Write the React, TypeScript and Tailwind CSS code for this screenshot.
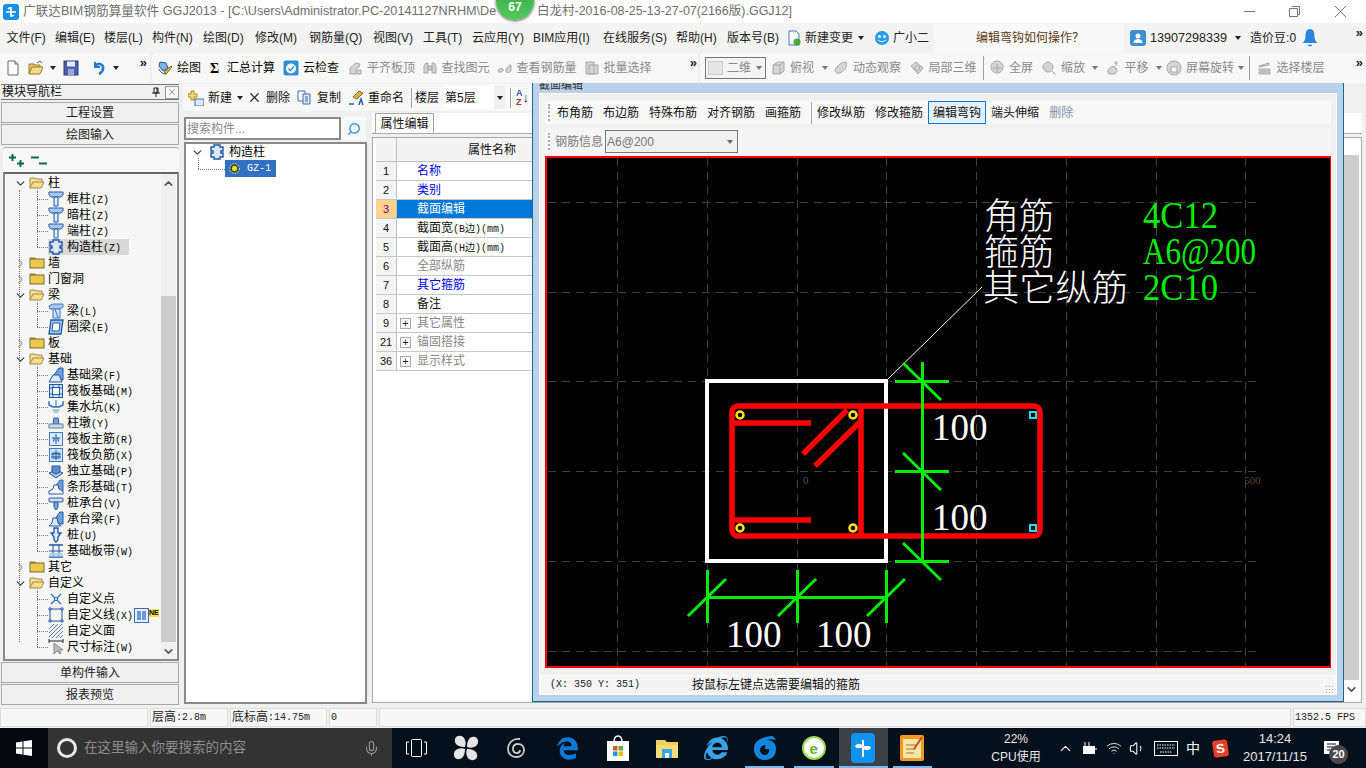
import type { ReactNode } from 'react'
import { FaEdgeLegacy, FaInternetExplorer } from 'react-icons/fa'
import { Mic, ChevronUp, ChevronDown, ChevronRight, Volume1, Wifi, Search, X } from 'lucide-react'

const Caret = ({ className = '' }: { className?: string }) => (
  <span className={`inline-block h-0 w-0 border-x-[3px] border-t-[4px] border-x-transparent border-t-[#222] ${className}`} />
)

const More = () => <span className="text-[13px] font-bold leading-none text-[#222]">»</span>

const Sep = () => <span className="h-[24px] w-px shrink-0 bg-[#a0a0a0]" />

// ---- toolbar icons
const Ico = ({ children, size = 16 }: { children: ReactNode; size?: number }) => (
  <svg width={size} height={size} viewBox="0 0 16 16" className="shrink-0">
    {children}
  </svg>
)

const FileIco = () => (
  <Ico><path d="M3 1h7l3 3v11H3z" fill="#fff" stroke="#667" /><path d="M10 1v3h3" fill="#dde" stroke="#667" /></Ico>
)
const OpenIco = () => (
  <Ico><path d="M1 14V4h5l1 1h5v2" fill="#e8c46a" stroke="#9a7a2a" /><path d="M1 14l3-7h11l-3 7z" fill="#f3d98c" stroke="#9a7a2a" /><path d="M9 3l3-2 2 2" fill="none" stroke="#2a6ab0" /></Ico>
)
const SaveIco = () => (
  <Ico><rect x="1" y="1" width="14" height="14" fill="#4a5fb0" stroke="#2c3a80" /><rect x="4" y="1.5" width="8" height="5" fill="#e8ecf8" /><rect x="5" y="9" width="6" height="6" fill="#9aa8d8" /></Ico>
)
const UndoIco = () => (
  <Ico><path d="M4 2v5h5" fill="none" stroke="#2a7ad0" strokeWidth="2" /><path d="M4 6c3-4 9-2 8 3-.5 2.5-2 4-4 5" fill="none" stroke="#2a7ad0" strokeWidth="2.6" /></Ico>
)
const DrawIco = () => (
  <Ico><path d="M3 2l6 1 2 5-5 3-4-5z" fill="#7fb2e6" stroke="#2a5a9a" /><path d="M7 12l7-6 1 1-6 7z" fill="#e8b23a" stroke="#8a6a1a" /><path d="M2 9c1 3 4 5 7 5" fill="none" stroke="#2a5a9a" /></Ico>
)
const CloudIco = () => (
  <Ico><rect x="0.5" y="0.5" width="15" height="15" rx="2" fill="#2f8fdc" /><circle cx="8" cy="8.5" r="5" fill="#fff" /><path d="M5.5 8.5l2 2 3.500-4" fill="none" stroke="#2f8fdc" strokeWidth="1.500" /></Ico>
)
const Dim = ({ d }: { d: string }) => (
  <Ico><path d={d} fill="#d4d4d4" stroke="#a8a8a8" /></Ico>
)
const GrayIcons = {
  align: 'M3 14V8l6-5 4 1-1 3-3 1v6z M10 10h4v4h-4z',
  find: 'M2 13V6l2-3h2v10z M10 13V3h2l2 3v7z M6 6h4v4H6z',
  look: 'M1 11c0-2 3-3 5-2v2c-1 1-5 2-5 0z M9 11c0-3 3-6 5-6v6c-2 2-5 2-5 0z',
  batch: 'M2 2h8v12H2z M5 5h9v9H5z',
  top: 'M3 5l5-3h6v9l-4 3H3z M3 5h7v9 M10 5l4-3',
  orbit: 'M2 11c2-6 7-9 11-9 2 3-1 9-6 11-2 1-4 0-5-2z',
  local: 'M2 6l5-4 7 6-5 6z M5 8l3-3 3 3-3 3z',
  full: 'M8 1a6 6 0 1 0 .01 0z M8 4v8 M4 8h8',
  zoom: 'M7 2a5 5 0 1 0 .01 0z M10.5 10.5l4 4',
  pan: 'M4 14c-2-2-1-5 1-6l3-2 3 2 1 3-2 3z M11 1v5 M9 3h4',
  rotate: 'M8 1a7 7 0 1 0 .01 0z M5 7h6v5H5z',
  floor: 'M2 6l10-3v2L2 7z M2 9h11v2H2z M2 12h11v2H2z'
}

const Tool = ({ icon, label, w, gray, caret }: { icon: ReactNode; label: string; w: string; gray?: boolean; caret?: string }) => (
  <div className={`flex shrink-0 items-center ${w}`}>
    {icon}
    <span className={`ml-[4px] whitespace-nowrap ${gray ? 'text-[#8a8a8a]' : 'text-[#111]'}`}>{label}</span>
    {caret && <Caret className={`${caret} border-t-[#777]`} />}
  </div>
)

const menus = [
  { t: '文件(F)', w: 'w-[48.5px]' },
  { t: '编辑(E)', w: 'w-[49px]' },
  { t: '楼层(L)', w: 'w-[48px]' },
  { t: '构件(N)', w: 'w-[51px]' },
  { t: '绘图(D)', w: 'w-[52px]' },
  { t: '修改(M)', w: 'w-[54px]' },
  { t: '钢筋量(Q)', w: 'w-[64px]' },
  { t: '视图(V)', w: 'w-[50px]' },
  { t: '工具(T)', w: 'w-[49px]' },
  { t: '云应用(Y)', w: 'w-[61px]' },
  { t: 'BIM应用(I)', w: 'w-[70px]' },
  { t: '在线服务(S)', w: 'w-[73px]' },
  { t: '帮助(H)', w: 'w-[51px]' },
  { t: '版本号(B)', w: 'w-[58px]' }
]

function TitleBar() {
  return (
    <div className="relative flex h-[23px] shrink-0 items-center bg-white text-[#6e6e6e]">
      <span className="ml-[3px] flex h-[16px] w-[16px] items-center justify-center rounded-[3px] bg-[#1a8fe8]">
        <svg width="12" height="12" viewBox="0 0 12 12"><path d="M6 1v10M1 6h10M3 3c2-2 4 0 3 3M9 9c-2 2-4 0-3-3" fill="none" stroke="#fff" strokeWidth="1.6" /></svg>
      </span>
      <span className="ml-[4px] w-[474px] overflow-hidden whitespace-nowrap text-[12.65px]">广联达BIM钢筋算量软件 GGJ2013 - [C:\Users\Administrator.PC-20141127NRHM\De</span>
      <span className="ml-[40px] whitespace-nowrap text-[12.5px]">白龙村-2016-08-25-13-27-07(2166版).GGJ12]</span>
      <div className="ml-auto flex items-center">
        <svg width="11" height="11" viewBox="0 0 11 11" fill="none" stroke="#777" className="mr-[34px]"><path d="M0 5.5h11" /></svg>
        <svg width="11" height="11" viewBox="0 0 11 11" fill="none" stroke="#777" className="mr-[35px]"><path d="M2.500.5h8v8h-2M.5 2.500h8v8h-8z" /></svg>
        <svg width="11" height="11" viewBox="0 0 11 11" fill="none" stroke="#777" className="mr-[20px]"><path d="M0 0l11 11M11 0L0 11" /></svg>
      </div>
      {/* floating speed badge */}
      <div className="absolute left-[496px] top-[-18px] flex h-[38px] w-[38px] items-end justify-center rounded-full bg-gradient-to-b from-[#2fa548] to-[#55c85a] pb-[7px] text-[12px] font-bold leading-none text-white shadow-[0_1px_3px_#555]">67</div>
    </div>
  )
}

function MenuBar() {
  return (
    <div className="flex h-[30px] shrink-0 items-center bg-[#f3f3f3] pl-[6.5px] text-[#222]">
      {menus.map((m) => (
        <span key={m.t} className={`shrink-0 whitespace-nowrap ${m.w}`}>{m.t}</span>
      ))}
      <div className="ml-[1px] flex w-[86px] shrink-0 items-center">
        <Ico><path d="M3 1h7l3 3v11H3z" fill="#fff" stroke="#3a7ac0" /><circle cx="11" cy="12" r="3.5" fill="#4aa83a" /></Ico>
        <span className="ml-[3px] whitespace-nowrap">新建变更</span>
        <Caret className="ml-[5px]" />
      </div>
      <div className="ml-[2px] flex w-[60px] shrink-0 items-center">
        <svg width="16" height="16" viewBox="0 0 16 16"><circle cx="8" cy="8" r="7" fill="#2a9be8" /><circle cx="5.5" cy="6.5" r="1.5" fill="#fff" /><circle cx="10.5" cy="6.5" r="1.5" fill="#fff" /><path d="M4 10c2 2 6 2 8 0" fill="none" stroke="#fff" /></svg>
        <span className="ml-[3px] whitespace-nowrap">广小二</span>
      </div>
      <div className="flex h-[29px] w-[190px] shrink-0 items-center rounded-[3px] bg-[#f9f9f9] pl-[42px] text-[#5c3a10]">编辑弯钩如何操作？</div>
      <div className="ml-[6px] flex h-[16px] w-[16px] shrink-0 items-center justify-center rounded-[3px] bg-[#3c8fd0]">
        <svg width="12" height="12" viewBox="0 0 12 12"><circle cx="6" cy="4" r="2.5" fill="#fff" /><path d="M1.5 11c0-3 2-4 4.500-4s4.500 1 4.500 4z" fill="#fff" /></svg>
      </div>
      <span className="ml-[4px] text-[12.6px] text-[#222]">13907298339</span>
      <Caret className="ml-[8px]" />
      <span className="ml-[9px] whitespace-nowrap">造价豆:0</span>
      <svg width="16" height="20" viewBox="0 0 14 18" className="ml-[6px]"><path d="M7 1c3 0 4 3 4 6s1 5 2.500 6.500H.5C2 12 3 10 3 7s1-6 4-6z" fill="#2a84e0" /><path d="M5 15h4c0 2-4 2-4 0z" fill="#2a84e0" /></svg>
      <span className="ml-auto mr-[3px] mb-[10px]"><More /></span>
    </div>
  )
}

function MainToolbar() {
  return (
    <div className="flex h-[30px] shrink-0 items-center bg-[#efefef]">
      <div className="flex h-[30px] w-[150px] shrink-0 items-center rounded-r-[4px] bg-[#f8f8f8] pl-[5px]">
        <FileIco />
        <span className="ml-[7px]"><OpenIco /></span>
        <Caret className="ml-[6px]" />
        <span className="ml-[7px]"><SaveIco /></span>
        <span className="ml-[5px] mr-[7px]"><Sep /></span>
        <UndoIco />
        <Caret className="ml-[6px]" />
        <span className="ml-auto mr-[3px] mb-[10px]"><More /></span>
      </div>
      <div className="ml-[2px] flex h-[30px] w-[546px] shrink-0 items-center rounded-[4px] bg-[#f8f8f8] pl-[5px]">
        <Tool w="w-[53px]" icon={<DrawIco />} label="绘图" />
        <div className="flex w-[73px] shrink-0 items-center">
          <span className="w-[14px] font-['Liberation_Serif',serif] text-[14px] font-bold">Σ</span>
          <span className="ml-[3px] whitespace-nowrap">汇总计算</span>
        </div>
        <Tool w="w-[64px]" icon={<CloudIco />} label="云检查" />
        <Tool w="w-[74.5px]" gray icon={<Dim d={GrayIcons.align} />} label="平齐板顶" />
        <Tool w="w-[75px]" gray icon={<Dim d={GrayIcons.find} />} label="查找图元" />
        <Tool w="w-[87px]" gray icon={<Dim d={GrayIcons.look} />} label="查看钢筋量" />
        <Tool w="w-[70px]" gray icon={<Dim d={GrayIcons.batch} />} label="批量选择" />
        <span className="ml-auto mr-[1px] mb-[10px]"><More /></span>
      </div>
      <div className="ml-[2px] flex h-[30px] flex-1 items-center rounded-l-[4px] bg-[#f8f8f8] pl-[5px]">
        <div className="flex h-[22px] w-[61px] shrink-0 items-center border border-[#777] bg-[#f3f3f3] pl-[2px] text-[#8a8a8a]">
          <span className="h-[14px] w-[15px] border border-[#ccc] bg-[#e6e6e6]" />
          <span className="ml-[4px] whitespace-nowrap">二维</span>
          <Caret className="ml-[5px] border-t-[#777]" />
        </div>
        <span className="w-[4px] shrink-0" />
        <Tool w="w-[63px]" gray caret="ml-[8px]" icon={<Dim d={GrayIcons.top} />} label="俯视" />
        <Tool w="w-[75.5px]" gray icon={<Dim d={GrayIcons.orbit} />} label="动态观察" />
        <Tool w="w-[74.5px]" gray icon={<Dim d={GrayIcons.local} />} label="局部三维" />
        <Sep />
        <span className="w-[5px] shrink-0" />
        <Tool w="w-[52px]" gray icon={<Dim d={GrayIcons.full} />} label="全屏" />
        <Tool w="w-[63.5px]" gray caret="ml-[7px]" icon={<Dim d={GrayIcons.zoom} />} label="缩放" />
        <Tool w="w-[61.5px]" gray caret="ml-[7px]" icon={<Dim d={GrayIcons.pan} />} label="平移" />
        <Tool w="w-[82.5px]" gray caret="ml-[4px]" icon={<Dim d={GrayIcons.rotate} />} label="屏幕旋转" />
        <Sep />
        <span className="w-[7px] shrink-0" />
        <Tool w="w-[69px]" gray icon={<Dim d={GrayIcons.floor} />} label="选择楼层" />
        <span className="ml-auto mr-[3px] mb-[10px]"><More /></span>
      </div>
    </div>
  )
}

// ---- module tree
type Kind = 'col' | 'gz' | 'beam' | 'ring' | 'jl' | 'grid' | 'pit' | 'dun' | 'main' | 'neg' | 'indep' | 'strip' | 'cap' | 'capb' | 'pile' | 'band' | 'point' | 'line' | 'face' | 'dim'

const B = '#1f56a8'
const L = '#a9c8ee'

function TreeIco({ kind }: { kind: Kind }) {
  const parts: Record<Kind, ReactNode> = {
    col: <><path d="M1 1h14v3l-2 2H3L1 4z" fill={L} stroke={B} /><path d="M6 6h4v9H6z" fill="#dce9f8" stroke={B} /></>,
    gz: <path d="M5 1h6v2h3v4h-2v2h2v4h-3v2H5v-2H2V9h2V7H2V3h3z" fill="#dce9f8" stroke={B} strokeWidth="1.4" />,
    beam: <><path d="M1 3l4-2h10v3l-3 2H2z" fill={L} stroke="#3a78c8" /><path d="M5 6h7v9H5z" fill="#cfe2f7" stroke="#3a78c8" /><path d="M7 6l3 9" stroke="#3a78c8" /></>,
    ring: <><path d="M3 1h12l-2 14H1z" fill={L} stroke={B} strokeWidth="1.3" /><path d="M5 4h7l-1 8H4z" fill="#fff" stroke={B} /></>,
    jl: <><path d="M6 8l5-7h4v12h-5z" fill="#6f9ed8" stroke={B} /><path d="M1 15l4-7h6l3 7z" fill="#dce9f8" stroke={B} /></>,
    grid: <><rect x="1.5" y="1.5" width="13" height="13" fill="#dce9f8" stroke={B} /><rect x="4.5" y="4.5" width="7" height="7" fill="#fff" stroke={B} /><path d="M1 5h3M12 5h3M1 11h3M12 11h3M5 1v3M11 1v3M5 12v3M11 12v3" stroke={B} /></>,
    pit: <><path d="M1 2v4l4 2h6l4-2V2" fill="none" stroke="#2f6ab8" strokeWidth="1.4" /><path d="M4 10h8l-2 4H6z" fill={L} /><path d="M8 1v6" stroke="#2f6ab8" /></>,
    dun: <><path d="M6 3h4l1 6H5z" fill="#7ea6d8" stroke={B} /><rect x="1" y="9" width="14" height="4" fill="#cdd8e6" stroke="#6a84a8" /></>,
    main: <><rect x="1.5" y="1.5" width="13" height="13" fill="#dce9f8" stroke="#3a78c8" /><path d="M8 3v10M4 7h8M5 10h1v-3M11 10h-1v-3" fill="none" stroke={B} /></>,
    neg: <><rect x="1.5" y="1.5" width="13" height="13" fill="#cfe0f6" stroke="#3a78c8" /><path d="M8 3v10M3 7h10M3 10h10" stroke={B} /><rect x="5" y="6" width="6" height="5" fill="none" stroke={B} /></>,
    indep: <><path d="M1 10l7-3 7 3-7 5z" fill="#a8c4e8" stroke={B} /><path d="M4 3h8v6l-4 2-4-2z" fill="#5f8fce" stroke={B} /></>,
    strip: <><path d="M7 8l5-7h3v11h-4z" fill="#6f9ed8" stroke="#2f6ab8" /><path d="M1 15v-3l4-2 1-4h4l1 4 4 2v3z" fill="#fff" stroke={B} /></>,
    cap: <><rect x="1" y="3" width="14" height="4" rx="1" fill="#cfe0f6" stroke={B} /><path d="M6 7h4v5l-2 3-2-3z" fill="#7ea6d8" stroke={B} /></>,
    capb: <><path d="M7 8l5-7h3v12h-4z" fill="#6f9ed8" stroke={B} /><path d="M1 15l3-3 1-5h4l1 5 3 3z" fill="#dce9f8" stroke={B} /></>,
    pile: <path d="M6 1h4v5h3l-3 4v3l-2 2-2-2v-3L3 6h3z" fill="#dce9f8" stroke={B} strokeWidth="1.3" />,
    band: <><path d="M1 2h14M1 14h14" stroke={B} strokeWidth="1.4" /><path d="M5 2v12M11 2v12M1 8h14" stroke={B} /><rect x="1" y="10" width="14" height="4" fill={L} opacity=".7" /></>,
    point: <><path d="M3 3l10 10M13 3L3 13" stroke="#2a6ac8" strokeWidth="1.3" /><circle cx="8" cy="8" r="1.5" fill="#f6f6f6" stroke="#2a6ac8" /></>,
    line: <><rect x="2" y="2" width="12" height="12" fill="none" stroke={B} /><path d="M1 1h2v2H1zM13 1h2v2h-2zM1 13h2v2H1zM13 13h2v2h-2z" fill="#fff" stroke={B} /></>,
    face: <path d="M1 6l5-5M1 10l9-9M1 14L14 1M4 15L15 4M8 15l7-7M12 15l3-3" stroke="#5a82b8" />,
    dim: <><path d="M1 2h14M1 0v4M15 0v4" stroke="#222" /><path d="M6 4v11l3-3 3 3 1-1-2-3h4z" fill="#bbb" stroke="#888" /></>
  }
  return <Ico>{parts[kind]}</Ico>
}

const Folder = ({ open }: { open: boolean }) => (
  <svg width="16" height="14" viewBox="0 0 16 14" className="shrink-0">
    {open ? (
      <>
        <path d="M1 12V2h5l1 1h6v3" fill="#f2dc9e" stroke="#a98a3c" />
        <path d="M1 12l3-6h11l-3 6z" fill="#f6dc8e" stroke="#a98a3c" />
      </>
    ) : (
      <>
        <path d="M1 3V2h5l1 1z" fill="#f6e6ae" stroke="#8e7a3a" />
        <rect x="1" y="3" width="14" height="9" fill="#eec64e" stroke="#7a6a2a" />
      </>
    )}
  </svg>
)

type Row = { t: string; k?: string; kind?: Kind; open?: boolean; last?: boolean; sel?: boolean; isNew?: boolean }

const tree: Row[] = [
  { t: '柱', open: true },
  { t: '框柱', k: '(Z)', kind: 'col' },
  { t: '暗柱', k: '(Z)', kind: 'col' },
  { t: '端柱', k: '(Z)', kind: 'col' },
  { t: '构造柱', k: '(Z)', kind: 'gz', last: true, sel: true },
  { t: '墙', open: false },
  { t: '门窗洞', open: false },
  { t: '梁', open: true },
  { t: '梁', k: '(L)', kind: 'beam' },
  { t: '圈梁', k: '(E)', kind: 'ring', last: true },
  { t: '板', open: false },
  { t: '基础', open: true },
  { t: '基础梁', k: '(F)', kind: 'jl' },
  { t: '筏板基础', k: '(M)', kind: 'grid' },
  { t: '集水坑', k: '(K)', kind: 'pit' },
  { t: '柱墩', k: '(Y)', kind: 'dun' },
  { t: '筏板主筋', k: '(R)', kind: 'main' },
  { t: '筏板负筋', k: '(X)', kind: 'neg' },
  { t: '独立基础', k: '(P)', kind: 'indep' },
  { t: '条形基础', k: '(T)', kind: 'strip' },
  { t: '桩承台', k: '(V)', kind: 'cap' },
  { t: '承台梁', k: '(F)', kind: 'capb' },
  { t: '桩', k: '(U)', kind: 'pile' },
  { t: '基础板带', k: '(W)', kind: 'band', last: true },
  { t: '其它', open: false },
  { t: '自定义', open: true },
  { t: '自定义点', kind: 'point' },
  { t: '自定义线', k: '(X)', kind: 'line', isNew: true },
  { t: '自定义面', kind: 'face' },
  { t: '尺寸标注', k: '(W)', kind: 'dim', last: true }
]

const mono = "font-['Liberation_Mono','Noto_Sans_CJK_SC',monospace]"

function TreeRow({ r }: { r: Row }) {
  if (!r.kind) {
    return (
      <div className="flex h-[16px] items-center pl-[9px]">
        {r.open ? (
          <ChevronDown size={13} strokeWidth={2.5} className="shrink-0 text-[#444]" />
        ) : (
          <ChevronRight size={13} strokeWidth={2.5} className="shrink-0 text-[#aaa]" />
        )}
        <span className="ml-[2px] flex"><Folder open={!!r.open} /></span>
        <span className="ml-[3px] whitespace-nowrap">{r.t}</span>
      </div>
    )
  }
  return (
    <div className="relative flex h-[16px] items-center pl-[43px]">
      <span className="absolute left-[32px] top-[8px] w-[11px] border-t border-dotted border-[#777]" />
      <span className="absolute left-[32px] top-0 h-[8px] border-l border-dotted border-[#777]" />
      {!r.last && <span className="absolute left-[32px] top-[8px] h-[8px] border-l border-dotted border-[#777]" />}
      <div className={`flex h-[16px] items-center ${r.sel ? 'w-[81px] bg-[#d9d9d9]' : ''}`}>
        <TreeIco kind={r.kind} />
        <span className="ml-[3px] whitespace-nowrap">
          {r.t}
          {r.k && <span className={`${mono} text-[10px]`}>{r.k}</span>}
        </span>
      </div>
      {r.isNew && (
        <span className="ml-[1px] flex items-center">
          <svg width="15" height="15" viewBox="0 0 15 15"><rect x=".5" y=".5" width="14" height="14" fill="#e8eef8" stroke="#3a6ab0" /><path d="M3 3h4v9H3zM8 3h4v9H8z" fill="#6a98d8" /></svg>
          <span className="mb-[5px] h-[8px] overflow-hidden bg-[#ffe24a] text-[7px] font-bold leading-[8px] text-black">NE</span>
        </span>
      )}
    </div>
  )
}

const NavBtn = ({ t }: { t: string }) => (
  <div className="flex h-[21px] items-center justify-center border border-[#a8a8a8] bg-[#f0f0f0] text-[#222]">{t}</div>
)

function NavPanel() {
  return (
    <div className="flex w-[179px] shrink-0 flex-col pl-[1px]">
      <div className="flex h-[16px] items-center border-y border-[#777] text-[12px] leading-none text-[#111]">
        <span className="ml-[1px]">模块导航栏</span>
        <svg width="8" height="10" viewBox="0 0 8 10" className="ml-auto mr-[5px]"><path d="M2 1h4v5H2zM0 6h8M4 6v4M5 1v5" fill="none" stroke="#222" /></svg>
        <span className="flex h-[13px] w-[14px] items-center justify-center border border-[#999] bg-[#f7f7f7]"><X size={10} strokeWidth={1} /></span>
      </div>
      <div className="mt-[2px] flex flex-col gap-px"><NavBtn t="工程设置" /><NavBtn t="绘图输入" /></div>
      <div className="ml-[2px] mt-[2px] flex h-[25px] items-center rounded-t-[3px] border-t border-[#a8a8a8] bg-[#f8f8f8] pl-[5px]">
        <svg width="17" height="14" viewBox="0 0 17 14"><path d="M1 4.5h7M4.5 1v7M9 10.5h7M12.5 7v7" stroke="#0a6a58" strokeWidth="2" /></svg>
        <svg width="17" height="14" viewBox="0 0 17 14" className="ml-[6px]"><path d="M0 4.5h8M8 10.5h8" stroke="#0a6a58" strokeWidth="2" /></svg>
      </div>
      <div className="relative ml-[2px] h-[489px] border-2 border-[#8a8a8a] border-t-[#666] bg-[#f6f6f6] pt-[1px]">
        <span className="absolute left-[14px] top-[16px] h-[452px] border-l border-dotted border-[#777]" />
        {tree.map((r, i) => (
          <TreeRow key={i} r={r} />
        ))}
        {/* tree scrollbar */}
        <div className="absolute bottom-0 right-[1px] top-0 flex w-[15px] flex-col items-center bg-[#f0f0f0]">
          <ChevronUp size={13} strokeWidth={3} className="mt-[3px] text-[#555]" />
          <span className="mt-[106px] h-[346px] w-full bg-[#cdcdcd]" />
          <ChevronDown size={13} strokeWidth={3} className="mt-[3px] text-[#555]" />
        </div>
      </div>
      <div className="mt-px flex flex-col gap-px"><NavBtn t="单构件输入" /><NavBtn t="报表预览" /></div>
    </div>
  )
}

function ComponentPanel() {
  return (
    <div className="ml-[5px] flex w-[183px] shrink-0 flex-col">
      <div className="mt-[33px] flex h-[23px] items-stretch">
        <div className="flex w-[157px] items-center border-2 border-[#8a8a8a] bg-white pl-[1px] text-[#8a8a8a]">搜索构件...</div>
        <div className="flex w-[25px] items-center justify-center bg-[#f8f8f8]">
          <Search size={14} strokeWidth={2.5} className="scale-x-[-1] text-[#3a9ad9]" />
        </div>
      </div>
      <div className="mt-[2px] h-[562px] border-2 border-[#8a8a8a] bg-white">
        <div className="flex h-[16px] items-center pl-[5px]">
          <ChevronDown size={13} strokeWidth={2.5} className="text-[#444]" />
          <span className="ml-[5px]"><TreeIco kind="gz" /></span>
          <span className="ml-[4px]">构造柱</span>
        </div>
        <div className="relative flex h-[17px] items-center pl-[39px]">
          <span className="absolute left-[12px] top-[-2px] h-[11px] border-l border-dotted border-[#777]" />
          <span className="absolute left-[12px] top-[9px] w-[27px] border-t border-dotted border-[#777]" />
          <div className="flex h-[17px] w-[51px] items-center bg-[#3370c4] pl-[4px]">
            <svg width="11" height="11" viewBox="0 0 11 11"><circle cx="5.5" cy="5.5" r="3.2" fill="#ffe600" stroke="#222" /><circle cx="5.5" cy="5.5" r="5" fill="none" stroke="#ffe600" strokeDasharray="1.5 1.5" /></svg>
            <span className={`${mono} ml-[7px] text-[10px] text-white`}>GZ-1</span>
          </div>
        </div>
      </div>
    </div>
  )
}

const props = [
  { n: '1', t: '名称', c: 'text-[#0000ff]' },
  { n: '2', t: '类别', c: 'text-[#0000ff]' },
  { n: '3', t: '截面编辑', c: 'text-white', on: true },
  { n: '4', t: '截面宽', k: '(B边)(mm)', c: 'text-[#111]' },
  { n: '5', t: '截面高', k: '(H边)(mm)', c: 'text-[#111]' },
  { n: '6', t: '全部纵筋', c: 'text-[#888]' },
  { n: '7', t: '其它箍筋', c: 'text-[#0000ff]' },
  { n: '8', t: '备注', c: 'text-[#111]' },
  { n: '9', t: '其它属性', c: 'text-[#888]', plus: true },
  { n: '21', t: '锚固搭接', c: 'text-[#888]', plus: true },
  { n: '36', t: '显示样式', c: 'text-[#888]', plus: true }
]

function PropertyPanel() {
  return (
    <div className="ml-[5px] flex min-w-0 flex-1 flex-col pr-[4px]">
      <div className="mt-[29px] flex h-[21px] items-end border-b border-[#a8a8a8] bg-white">
        <div className="ml-[3px] flex h-[20px] w-[59px] items-center justify-center border-x border-t border-[#a8a8a8] bg-white text-[#111]">属性编辑</div>
      </div>
      <div className="mt-[3px] flex h-[566px] border border-[#a8a8a8] bg-white pl-[3px]">
        <div className="flex min-w-0 flex-1 flex-col">
          <div className="flex h-[24px] border-b border-[#c0c0c0] bg-[#f4f4f4]">
            <div className="w-[21px] shrink-0 border-r border-[#c0c0c0]" />
            <div className="pl-[71px] pt-[3px] text-[#111]">属性名称</div>
          </div>
          {props.map((p) => (
            <div key={p.n} className="flex h-[19px] border-b border-[#c8c8c8]">
              <div className={`flex w-[21px] shrink-0 items-center justify-center border-r border-[#c0c0c0] text-[11px] ${p.on ? 'bg-[#ffd28e] text-[#800080]' : 'bg-[#f4f4f4] text-[#111]'}`}>{p.n}</div>
              <div className={`flex flex-1 items-center ${p.on ? 'bg-[#0078d7]' : ''} ${p.c}`}>
                {p.plus ? (
                  <span className="ml-[3px] mr-[6px] flex h-[11px] w-[11px] items-center justify-center border border-[#aaa] text-[11px] leading-none text-[#222]">+</span>
                ) : (
                  <span className="w-[20px]" />
                )}
                <span className="whitespace-nowrap">
                  {p.t}
                  {p.k && <span className={`${mono} text-[10px]`}>{p.k}</span>}
                </span>
              </div>
            </div>
          ))}
        </div>
        {/* scrollbar peeking out beside the dialog */}
        <div className="mr-[2px] flex w-[15px] shrink-0 flex-col items-center">
          <span className="mt-[17px] h-[525px] w-full bg-[#cdcdcd]" />
          <ChevronDown size={13} strokeWidth={3} className="mt-[3px] text-[#555]" />
        </div>
      </div>
    </div>
  )
}

function ComponentToolbar() {
  return (
    <div className="absolute left-[183px] top-[1px] flex h-[27px] w-[349px] items-center rounded-[3px] bg-[#f8f8f8] pl-[5px] text-[#111]">
      <svg width="16" height="16" viewBox="0 0 16 16" className="shrink-0"><path d="M3 1h3v3h3v3H6v3H3V7H0V4h3z" fill="#f5dc6a" stroke="#a98a2a" /><rect x="7" y="9" width="9" height="7" fill="#dfe9f6" stroke="#3a6ab0" /></svg>
      <span className="ml-[4px] whitespace-nowrap">新建</span>
      <Caret className="ml-[5px]" />
      <X size={15} strokeWidth={2} className="ml-[4px] shrink-0 text-[#333]" />
      <span className="ml-[4px] whitespace-nowrap">删除</span>
      <svg width="15" height="15" viewBox="0 0 15 15" className="ml-[7px] shrink-0"><path d="M1 1h7v10H1z" fill="#fff" stroke="#3a6ab0" /><path d="M6 4h7v10H6z" fill="#dfe9f6" stroke="#3a6ab0" /><path d="M8 7h3M8 9h3M8 11h3" stroke="#3a6ab0" /></svg>
      <span className="ml-[5px] whitespace-nowrap">复制</span>
      <svg width="17" height="16" viewBox="0 0 17 16" className="ml-[7px] shrink-0"><path d="M5 7l6-6 4 2-6 6z" fill="#d9b24a" stroke="#8a6a1a" /><path d="M1 14h5M11 15l2-6 2 6" fill="none" stroke="#2a5aa8" strokeWidth="1.5" /></svg>
      <span className="ml-[3px] whitespace-nowrap">重命名</span>
      <span className="ml-[7px] mr-[3px] h-[20px] w-px shrink-0 bg-[#a0a0a0]" />
      <span className="whitespace-nowrap">楼层</span>
      <div className="ml-[5px] flex h-[23px] w-[61px] shrink-0 items-center bg-white pl-[1px]">
        第5层
        <span className="ml-auto flex h-[23px] w-[11px] items-center justify-center bg-[#f0f0f0]"><Caret /></span>
      </div>
      <span className="ml-[5px] h-[20px] w-px shrink-0 bg-[#a0a0a0]" />
      <span className="ml-[5px] flex flex-col text-[9px] font-bold leading-[9px] text-[#3a5aa8]">A<span className="text-[#a83a3a]">Z</span></span>
      <span className="text-[13px] leading-none">↓</span>
    </div>
  )
}

const gridX = [617.5, 707.5, 797.5, 886.5, 976.5, 1066.5, 1156.5, 1245.5]
const gridY = [202, 292, 381.5, 471.5, 561.5, 651]
const cjk = "'Noto Sans CJK SC', sans-serif"
const serif = "'Liberation Serif', serif"

function Drawing() {
  const G = '#00ee00'
  return (
    <svg viewBox="547 158 783 508" className="block h-[508px] w-[783px] bg-black">
      <g stroke="#404040" strokeDasharray="8 6" fill="none" shapeRendering="crispEdges">
        {gridX.map((x) => <line key={x} x1={x} x2={x} y1={158} y2={668} />)}
        {gridY.map((y) => <line key={y} x1={548} x2={1260} y1={y} y2={y} />)}
      </g>
      <text x="803" y="484" fontSize="11" fill="#555" fontFamily={serif}>0</text>
      <text x="1244" y="484" fontSize="11" fill="#5a4a20" fontFamily={serif}>500</text>
      <line x1="888" y1="379" x2="982" y2="287" stroke="#fff" />
      <rect x="707" y="381" width="179" height="180" fill="none" stroke="#fff" strokeWidth="4" />
      <g fill="none" stroke="#ff0000" strokeWidth="5.5">
        <rect x="732" y="406" width="308" height="130" rx="6" />
        <path d="M861 406v130M732 423h79M732 520h79M847 410l-44 44M860 422l-45 44" />
      </g>
      <g fill="none" stroke="#ffe600" strokeWidth="2.5">
        <circle cx="740" cy="415" r="3.5" />
        <circle cx="853" cy="415" r="3.5" />
        <circle cx="740" cy="528" r="3.5" />
        <circle cx="853" cy="528" r="3.5" />
      </g>
      <g fill="none" stroke="#22e0f0" strokeWidth="2">
        <rect x="1030" y="412" width="6" height="6" />
        <rect x="1030" y="525" width="6" height="6" />
      </g>
      <g fill="none" stroke={G} strokeWidth="3">
        <path d="M922.5 362v200M895 381.5h54M895 471.5h54M895 561.5h54M903 363l38 37M903 453l38 37M903 543l38 37" />
        <path d="M707.5 597.5h179M707.5 570v53M797.5 570v53M886.5 570v53M688 616l38-37M778 616l38-37M867 616l38-37" />
      </g>
      <g fill="#fff" fontSize="36" fontFamily={cjk} fontWeight="300">
        <text x="984" y="229" textLength="70" lengthAdjust="spacingAndGlyphs">角筋</text>
        <text x="984" y="265" textLength="70" lengthAdjust="spacingAndGlyphs">箍筋</text>
        <text x="983" y="301" textLength="145" lengthAdjust="spacingAndGlyphs">其它纵筋</text>
      </g>
      <g fill={G} fontSize="37" fontFamily={serif}>
        <text x="1143" y="228" textLength="75" lengthAdjust="spacingAndGlyphs">4C12</text>
        <text x="1143" y="264" textLength="113" lengthAdjust="spacingAndGlyphs">A6@200</text>
        <text x="1143" y="300" textLength="75" lengthAdjust="spacingAndGlyphs">2C10</text>
      </g>
      <g fill="#fff" fontSize="37" fontFamily={serif}>
        <text x="932" y="440">100</text>
        <text x="932" y="530">100</text>
        <text x="726" y="647">100</text>
        <text x="816" y="647">100</text>
      </g>
    </svg>
  )
}

const rebarTools = ['布角筋', '布边筋', '特殊布筋', '对齐钢筋', '画箍筋']
const rebarTools2 = ['修改纵筋', '修改箍筋']

function SectionDialog() {
  return (
    <div className="absolute bottom-[5px] left-[532px] top-0 flex w-[812px] flex-col border-x border-b border-[#1c6a80] bg-[#b9d1ea] px-[6px] pb-[6px]">
      <div className="h-[10px] shrink-0 overflow-hidden text-[11px] leading-[5px] text-[#333]">截面编辑</div>
      <div className="flex min-h-0 flex-1 flex-col border border-white bg-[#f0f0f0] px-[5px] pt-[7px]">
        <div className="flex h-[23px] shrink-0 items-center rounded-t-[3px] bg-[#f8f8f8] pl-[3px] text-[#111]">
          <span className="mr-[7px] h-[17px] border-l-2 border-dotted border-[#aaa]" />
          {rebarTools.map((t) => (
            <span key={t} className="mr-[10px] whitespace-nowrap">{t}</span>
          ))}
          <span className="mr-[5px] h-[22px] w-px bg-[#aaa]" />
          {rebarTools2.map((t) => (
            <span key={t} className="mr-[10px] whitespace-nowrap">{t}</span>
          ))}
          <span className="ml-[-5px] mr-[5px] flex h-[23px] w-[58px] items-center justify-center border border-[#0078d7] bg-[#e5f1fb]">编辑弯钩</span>
          <span className="mr-[10px] whitespace-nowrap">端头伸缩</span>
          <span className="text-[#7f93ad]">删除</span>
        </div>
        <div className="mt-[4px] flex h-[27px] shrink-0 items-center bg-[#f5f5f5] pl-[3px] text-[#7a7a7a]">
          <span className="mr-[5px] h-[17px] border-l-2 border-dotted border-[#aaa]" />
          <span className="whitespace-nowrap">钢筋信息</span>
          <div className="ml-[2px] flex h-[23px] w-[133px] items-center border border-[#777] bg-[#f0f0f0] pl-[1px] text-[#777]">
            A6@200
            <Caret className="ml-auto mr-[4px] border-t-[#666]" />
          </div>
        </div>
        <div className="mt-[1px] shrink-0 border-2 border-[#ff0000]"><Drawing /></div>
        <div className="-mx-[5px] mt-[7px] flex h-[19px] shrink-0 items-center bg-[#f4f4f4]">
          <div className={`${mono} flex h-[19px] w-[150px] shrink-0 items-center border-y border-l border-white pl-[9px] text-[10px] text-[#222]`}>(X: 350 Y: 351)</div>
          <div className="flex h-[19px] flex-1 items-center border border-white bg-[#f4f4f4] pl-[1px] text-[#111]">
            按鼠标左键点选需要编辑的箍筋
            <span className="ml-auto mr-[2px] mt-[8px] h-[8px] w-[8px] bg-[radial-gradient(#aaa_1px,transparent_1px)] bg-[length:3px_3px]" />
          </div>
        </div>
      </div>
    </div>
  )
}

const Kv = ({ cn, v }: { cn: string; v: string }) => (
  <>
    <span className="text-[12px]">{cn}</span>
    <span>{v}</span>
  </>
)

function StatusBar() {
  const cell = 'flex h-[19px] items-center border border-[#dcdcdc] bg-[#f7f7f7] shrink-0'
  return (
    <div className={`${mono} flex h-[21px] shrink-0 items-center gap-[2px] bg-[#f0f0f0] text-[10px] text-[#222]`}>
      <div className={`${cell} w-[148px]`} />
      <div className={`${cell} w-[78px] pl-[1px]`}><Kv cn="层高" v=":2.8m" /></div>
      <div className={`${cell} w-[97px] pl-[1px]`}><Kv cn="底标高" v=":14.75m" /></div>
      <div className={`${cell} w-[48px] pl-[1px]`}>0</div>
      <div className={`${cell} w-[912px]`} />
      <div className={`${cell} flex-1 pl-[1px]`}>1352.5 FPS</div>
    </div>
  )
}

const TaskSlot = ({ children, w, bar, on }: { children: ReactNode; w: string; bar?: boolean; on?: boolean }) => (
  <div className={`relative flex h-full shrink-0 items-center justify-center ${w} ${on ? 'bg-[#3a4248]' : ''}`}>
    {children}
    {bar && <span className={`absolute bottom-0 h-[2px] bg-[#76b9ed] ${on ? 'left-0 right-0' : 'left-[5px] right-[5px]'}`} />}
  </div>
)

function Taskbar() {
  return (
    <div className="flex h-[40px] shrink-0 items-center bg-[#04111c] text-white">
      <div className="flex h-full w-[48px] shrink-0 items-center justify-center bg-[#04080c]">
        <svg width="16" height="16" viewBox="0 0 16 16"><path d="M0 2.5l6.500-1V7.500H0zM7.500 1.300L16 0v7.500H7.500zM0 8.500h6.500v6L0 13.500zM7.500 8.500H16V16l-8.500-1.300z" fill="#fff" /></svg>
      </div>
      <div className="flex h-full w-[344px] shrink-0 items-center bg-[#333] pl-[9px] text-[14px] text-[#8c8c8c]">
        <span className="h-[20px] w-[20px] rounded-full border-[3px] border-[#e8e8e8]" />
        <span className="ml-[7px] text-[13.5px]">在这里输入你要搜索的内容</span>
        <Mic size={17} strokeWidth={1.5} className="ml-auto mr-[12px] text-[#999]" />
      </div>
      <div className="flex h-full items-center">
        <TaskSlot w="w-[49px]">
          <svg width="21" height="18" viewBox="0 0 21 18" fill="none" stroke="#fff"><rect x="5.5" y=".5" width="10" height="17" rx="1" /><path d="M3 3H.5v12H3M18 3h2.500v12H18" /></svg>
        </TaskSlot>
        <TaskSlot w="w-[49.5px]">
          <svg width="24" height="26" viewBox="0 0 24 26" fill="#e4e4e4"><path d="M11 12C4 12 0 9 1 4c1-4 7-4 9-1 2 3 2 6 1 9zM13 12c0-7 3-11 8-10 4 1 4 7 1 9-3 2-6 2-9 1zM13 14c7 0 11 3 10 8-1 4-7 4-9 1-2-3-2-6-1-9zM11 14c0 7-3 11-8 10-4-1-4-7-1-9 3-2 6-2 9-1z" /></svg>
        </TaskSlot>
        <TaskSlot w="w-[51.5px]">
          <svg width="20" height="22" viewBox="0 0 20 22" fill="none" stroke="#ccc" strokeWidth="1.8"><path d="M14 2C7 1 2 6 2 12c0 5 4 8 8 8 5 0 8-3 8-7s-3-6-6-6-5 2-5 5 2 4 4 4 3-1 3-3" /></svg>
        </TaskSlot>
        <TaskSlot w="w-[51px]"><FaEdgeLegacy size={23} className="text-[#0a78d7]" /></TaskSlot>
        <TaskSlot w="w-[49px]">
          <svg width="24" height="28" viewBox="0 0 24 28"><path d="M8 8c0-8 8-8 8 0" fill="none" stroke="#fff" strokeWidth="1.5" /><rect x="1" y="7" width="22" height="20" fill="#fff" /><rect x="7" y="12" width="4.5" height="4.5" fill="#e8502a" /><rect x="12.5" y="12" width="4.5" height="4.5" fill="#5cb82a" /><rect x="7" y="17.5" width="4.5" height="4.5" fill="#1a9ae0" /><rect x="12.5" y="17.5" width="4.5" height="4.5" fill="#f8b800" /></svg>
        </TaskSlot>
        <TaskSlot w="w-[49px]">
          <svg width="22" height="22" viewBox="0 0 22 22"><path d="M0 3h9l2 2h11v16H0z" fill="#f3cf5a" /><rect x="0" y="8" width="22" height="13" fill="#f8dc7a" /><rect x="6" y="12" width="10" height="9" fill="#3aa8e0" /><rect x="9" y="16" width="4" height="5" fill="#eaf6fc" /></svg>
        </TaskSlot>
        <TaskSlot w="w-[49px]"><FaInternetExplorer size={24} className="text-[#3aa0e8]" /></TaskSlot>
        <TaskSlot bar w="w-[49px]">
          <svg width="24" height="26" viewBox="0 0 24 26"><path d="M20 1L23 5c-4-1-7-1-9 0 6 0 9 4 9 9 0 7-5 11-11 11S1 21 1 14 6 2 20 1zM13 10c-4 0-6 2-6 5s2 5 5 5 5-3 4-6h-4v-2" fill="#1088e0" /></svg>
        </TaskSlot>
        <TaskSlot bar w="w-[49.5px]">
          <span className="flex h-[24px] w-[24px] items-center justify-center rounded-full border-2 border-[#9ad84a] bg-white text-[15px] font-bold leading-none text-[#5cb82a]">e</span>
        </TaskSlot>
        <TaskSlot on bar w="w-[49px]">
          <span className="flex h-[30px] w-[24px] items-center justify-center rounded-[4px] bg-[#1093f0]">
            <svg width="16" height="20" viewBox="0 0 16 20" fill="none" stroke="#fff" strokeWidth="2"><path d="M8 2v17M1 9h14M1 9c0-3 7-3 7 1M15 9c0 3-7 3-7-1" /></svg>
          </span>
        </TaskSlot>
        <TaskSlot bar w="w-[49.5px]">
          <svg width="24" height="26" viewBox="0 0 24 26"><rect width="24" height="26" rx="2" fill="#f09a20" /><rect x="3" y="4" width="18" height="19" fill="#fbe6a8" /><path d="M6 10h10M6 14h10M6 18h8" stroke="#a07a30" /><path d="M14 14L22 2" stroke="#d8402a" strokeWidth="2" /></svg>
        </TaskSlot>
      </div>
      <div className="ml-[54px] flex w-[50px] shrink-0 flex-col items-center text-[12px] leading-[18px] text-[#e8e8e8]">
        <span>22%</span>
        <span className="whitespace-nowrap">CPU使用</span>
      </div>
      <div className="ml-[16px] flex items-center">
        <ChevronUp size={17} strokeWidth={1.5} />
        <svg width="18" height="14" viewBox="0 0 18 14" className="ml-[5px]" fill="none" stroke="#fff"><rect x="4.5" y="5.5" width="11" height="7" fill="#fff" /><path d="M16 8h2M6 1v4M10 1v4" /></svg>
        <Wifi size={16} strokeWidth={1.5} className="ml-[9px] text-[#ddd]" />
        <Volume1 size={17} strokeWidth={1.5} className="ml-[7px]" />
        <svg width="24" height="15" viewBox="0 0 24 15" className="ml-[8px]" fill="none" stroke="#fff"><rect x=".5" y=".5" width="23" height="14" /><path d="M3 4h18M3 7h18M6 11h12" strokeDasharray="1.5 1" /></svg>
        <span className="ml-[8px] text-[14px]">中</span>
        <span className="ml-[13px] flex h-[17px] w-[15px] rotate-[-8deg] items-center justify-center rounded-[3px] bg-[#e8402a] text-[13px] font-bold leading-none text-white">S</span>
      </div>
      <div className="ml-[13px] flex w-[68px] shrink-0 flex-col items-center text-[13px] leading-[18px] text-[#e8e8e8]">
        <span>14:24</span>
        <span className="whitespace-nowrap">2017/11/15</span>
      </div>
      <div className="relative ml-[8px] h-full flex-1">
        <svg width="15" height="13" viewBox="0 0 15 13" className="absolute left-[7px] top-[13px]"><path d="M0 0h15v13H0z" fill="#fff" /><path d="M3 3h9M3 6h9M3 9h9" stroke="#04111c" /></svg>
        <span className="absolute left-[12px] top-[17px] flex h-[19px] w-[19px] items-center justify-center rounded-full bg-[#4a4a4a] text-[11px] font-bold text-white">20</span>
      </div>
    </div>
  )
}

export default function App() {
  return (
    <div className="flex h-[768px] w-[1366px] flex-col overflow-hidden bg-[#f0f0f0] font-['Liberation_Sans','Noto_Sans_CJK_SC',sans-serif] text-[12px]">
      <TitleBar />
      <MenuBar />
      <MainToolbar />
      <div className="relative flex h-[624px] shrink-0 pt-[1px]">
        <NavPanel />
        <ComponentPanel />
        <PropertyPanel />
        <ComponentToolbar />
        <SectionDialog />
      </div>
      <StatusBar />
      <Taskbar />
    </div>
  )
}
